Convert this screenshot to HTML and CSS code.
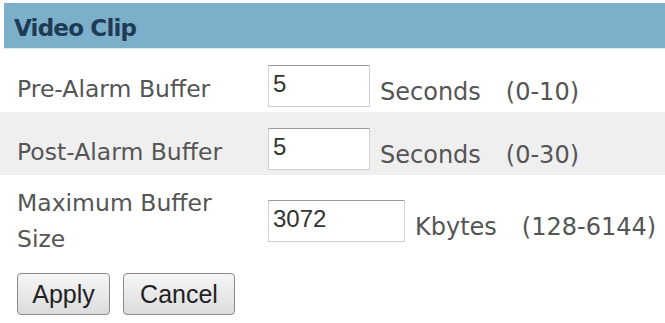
FILE: index.html
```html
<!DOCTYPE html>
<html>
<head>
<meta charset="utf-8">
<link rel="stylesheet" href="styles.css">
</head>
<body>
<div class="panel">
  <div class="header">Video Clip</div>
  <div class="row">
    <div class="label">Pre-Alarm Buffer</div>
    <input class="field" type="text" value="5">
    <div class="unit">Seconds</div>
    <div class="range">(0-10)</div>
  </div>
  <div class="row alt">
    <div class="label">Post-Alarm Buffer</div>
    <input class="field" type="text" value="5">
    <div class="unit">Seconds</div>
    <div class="range">(0-30)</div>
  </div>
  <div class="row tall">
    <div class="label">Maximum Buffer Size</div>
    <input class="field wide" type="text" value="3072">
    <div class="unit">Kbytes</div>
    <div class="range">(128-6144)</div>
  </div>
  <div class="buttons">
    <button class="btn apply">Apply</button>
    <button class="btn cancel">Cancel</button>
  </div>
</div>
</body>
</html>
```
FILE: styles.css
```css
html, body {
  margin: 0;
  padding: 0;
  background: #ffffff;
  overflow: hidden;
}
.panel {
  width: 665px;
  padding-top: 3px;
  font-family: "DejaVu Sans", Verdana, sans-serif;
  color: #555555;
}
.header {
  margin-left: 4px;
  height: 46px;
  box-sizing: border-box;
  padding-left: 10px;
  background: #7cafc9;
  border-bottom: 1px solid #d9eaf2;
  color: #1f3a55;
  font-weight: bold;
  font-size: 23px;
  letter-spacing: -0.8px;
  line-height: 50px;
}
.row {
  display: flex;
  align-items: center;
  padding: 15px 0 5px 17px;
  font-size: 24px;
}
.row.alt {
  background: #efefef;
}
.row.tall {
  padding-top: 10px;
  padding-bottom: 5px;
}
.label {
  width: 251px;
  flex: none;
  font-size: 23.5px;
  line-height: 36px;
  padding-top: 7px;
}
.tall .label {
  width: 210px;
  margin-right: 41px;
  padding-top: 0;
}
.field {
  width: 102px;
  height: 42px;
  box-sizing: border-box;
  margin: 0;
  padding: 0 4px 4px;
  border: 1px solid #d0d0d0;
  border-top-color: #9a9a9a;
  background: #ffffff;
  font-family: "Liberation Sans", Arial, sans-serif;
  font-size: 24px;
  color: #333333;
}
.field.wide {
  width: 137px;
}
.unit, .range {
  padding-top: 12px;
}
.unit {
  margin-left: 10px;
}
.range {
  margin-left: 25px;
}
.buttons {
  display: flex;
  gap: 13px;
  padding: 11px 0 0 17px;
}
.btn {
  height: 42px;
  box-sizing: border-box;
  margin: 0;
  padding: 0;
  border: 1px solid #8a8a8a;
  border-radius: 4px;
  background: linear-gradient(#f6f6f6, #dcdcdc);
  font-family: "Liberation Sans", Arial, sans-serif;
  font-size: 25px;
  color: #222222;
}
.apply { width: 93px; }
.cancel { width: 112px; }
```
